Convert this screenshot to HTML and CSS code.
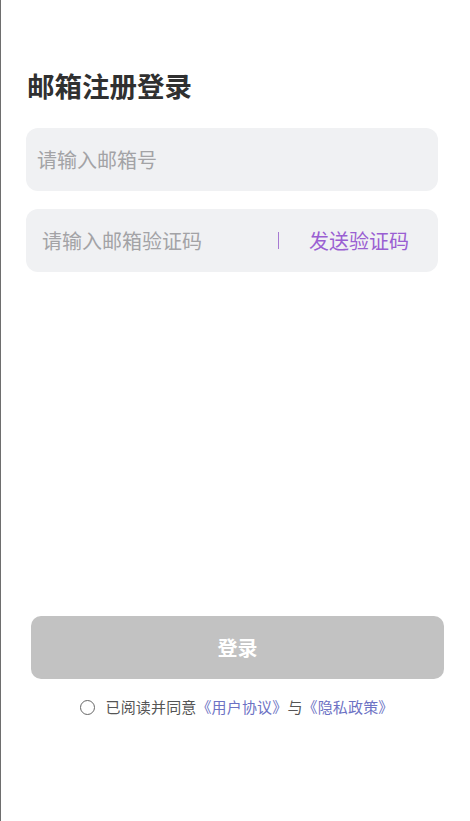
FILE: index.html
```html
<!DOCTYPE html>
<html lang="zh-CN">
<head>
<meta charset="utf-8">
<title>邮箱注册登录</title>
<link rel="stylesheet" href="styles.css">
</head>
<body>
<div class="page">
  <h1 class="title">邮箱注册登录</h1>
  <div class="field field-email">
    <input class="input" type="text" placeholder="请输入邮箱号">
  </div>
  <div class="field field-code">
    <input class="input" type="text" placeholder="请输入邮箱验证码">
    <span class="divider"></span>
    <span class="send">发送验证码</span>
  </div>
  <button class="login" type="button">登录</button>
  <div class="agree">
    <span class="check"></span>
    <span class="agree-text">已阅读并同意<a class="link">《用户协议》</a>与<a class="link">《隐私政策》</a></span>
  </div>
</div>
</body>
</html>
```

FILE: styles.css
```css
html, body {
  margin: 0;
  padding: 0;
  background: #ffffff;
}

body {
  font-family: "Noto Sans CJK SC", "Noto Sans", sans-serif;
}

.page {
  box-sizing: border-box;
  width: 470px;
  height: 821px;
  border-left: 1px solid #6e6e6e;
  padding: 67px 32px 0 25px;
  display: flex;
  flex-direction: column;
}

.title {
  margin: 0 0 0 1px;
  font-size: 27.5px;
  line-height: 36px;
  font-weight: 700;
  color: #303030;
}

.field {
  display: flex;
  align-items: center;
  height: 63px;
  background: #f0f1f3;
  border-radius: 12px;
  box-sizing: border-box;
}

.field-email {
  margin-top: 25px;
  padding-left: 11px;
}

.field-code {
  margin-top: 18px;
  padding-left: 16px;
  padding-right: 29px;
}

.input {
  flex: 1;
  min-width: 0;
  border: none;
  outline: none;
  background: transparent;
  padding: 0;
  font-family: "Noto Sans CJK SC", "Noto Sans", sans-serif;
  font-size: 20px;
  color: #333;
}

.input::placeholder {
  color: #a3a3a6;
}

.divider {
  width: 1px;
  height: 17px;
  background: #a77ad2;
  margin-right: 30px;
}

.send {
  font-size: 20px;
  color: #9a5fd2;
  white-space: nowrap;
}

.login {
  margin: 344px -6px 0 5px;
  height: 63px;
  border: none;
  border-radius: 10px;
  background: #c2c2c2;
  color: #ffffff;
  font-family: "Noto Sans CJK SC", "Noto Sans", sans-serif;
  font-size: 20px;
  font-weight: 700;
  padding: 0;
}

.agree {
  margin-top: 17px;
  display: flex;
  align-items: center;
  justify-content: center;
  gap: 11px;
  padding-left: 9px;
  height: 22px;
}

.check {
  width: 15px;
  height: 15px;
  border: 1.5px solid #666;
  border-radius: 50%;
  box-sizing: border-box;
}

.agree-text {
  font-size: 15px;
  line-height: 22px;
  color: #555555;
  letter-spacing: 0.15px;
}

.link {
  color: #6d72c4;
  text-decoration: none;
}
```
